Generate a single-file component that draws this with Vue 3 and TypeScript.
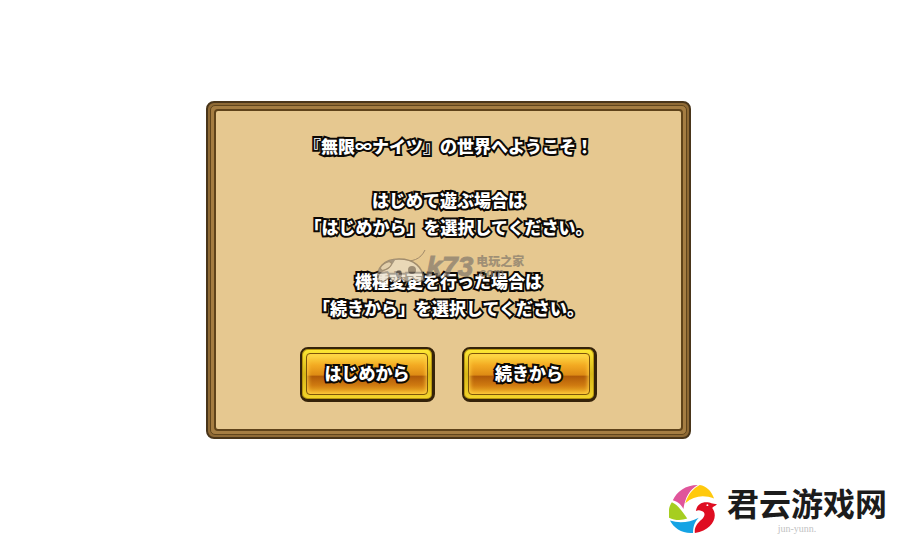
<script setup lang="ts">
interface Choice {
  id: string
  label: string
}

const paragraphs: string[][] = [
  ['『無限∞ナイツ』の世界へようこそ！'],
  ['はじめて遊ぶ場合は', '「はじめから」を選択してください。'],
  ['機種変更を行った場合は', '「続きから」を選択してください。'],
]

const choices: Choice[] = [
  { id: 'start', label: 'はじめから' },
  { id: 'continue', label: '続きから' },
]
</script>

<template>
  <main class="page">
    <section class="frame">
      <div class="frame-mid">
        <div class="panel">
          <div class="message">
            <p v-for="(lines, i) in paragraphs" :key="i">
              <span v-for="line in lines" :key="line" class="line outlined">{{ line }}</span>
            </p>
            <div class="watermark">
              <svg class="ghost" viewBox="0 0 54 36" width="54" height="36" aria-hidden="true">
                <path d="M25 11C37 14 46 10 50 1" fill="none" stroke="#84705a" stroke-width="1" />
                <path d="M3 31C1 19 9 10 24 10C39 10 48 18 49 31L43 33L38 29L32 33L26 29L20 33L14 29L8 33Z" fill="#ebdfc8" stroke="#84745f" stroke-width="1.5" />
                <path d="M3 29C2 19 9 11 21 10C17 15 16 20 9 22C6 23 4 26 3 29Z" fill="#8d8378" />
                <ellipse cx="11" cy="17" rx="6" ry="3" transform="rotate(-32 11 17)" fill="#e3d4b8" stroke="#84745f" />
                <ellipse cx="24" cy="25" rx="3" ry="4" fill="#81766a" />
                <ellipse cx="37" cy="21" rx="4" ry="4" fill="#81766a" />
              </svg>
              <b class="mark-name">k73</b>
              <span class="mark-side"><span>电玩之家</span><small>.com</small></span>
            </div>
          </div>
          <div class="choices">
            <button v-for="choice in choices" :key="choice.id" type="button" class="choice">
              <span class="choice-face outlined">{{ choice.label }}</span>
            </button>
          </div>
        </div>
      </div>
    </section>

    <footer class="brand">
      <svg class="brand-logo" viewBox="0 0 50 52" width="48" height="50" aria-hidden="true">
        <path d="M4 17C8 8 17 1 30 1C21 6 17 14 15 26C13 22 10 19 4 17Z" fill="#e0559b" />
        <path d="M32 1C39 2 44 7 47 15C36 11 26 12 17 20C20 10 25 5 32 1Z" fill="#ffc90d" />
        <path d="M3 19C8 21 13 27 19 36C13 38 6 38 0 35C-1 29 0 23 3 19Z" fill="#a6ce20" />
        <path d="M1 38C11 41 21 40 31 35C27 39 25 44 25 51C14 52 5 46 1 38Z" fill="#15a3e4" />
        <path d="M28 28C29 22 33 19 39 19C43 19 45 21 50 21C48 23 46 23 45 25C52 34 45 48 27 51C26 46 29 41 34 37C38 33 38 29 34 28C32 27 30 27 28 28Z" fill="#df0d21" />
        <circle cx="40" cy="22" r="1" fill="#fff" />
      </svg>
      <div class="brand-text">
        <strong>君云游戏网</strong>
        <span>jun-yunn.</span>
      </div>
    </footer>
  </main>
</template>

<style>
body {
  margin: 0;
  background: #fff;
}
</style>

<style scoped>
.page {
  position: relative;
  box-sizing: border-box;
  min-height: 100vh;
  display: flex;
  align-items: center;
  justify-content: center;
  font-family: "Noto Sans CJK JP", "Liberation Sans", sans-serif;
}

.frame {
  box-sizing: border-box;
  width: 54%;
  min-width: 340px;
  padding: 2px;
  border: 2px solid #49351a;
  border-radius: 8px;
  background: #8f6a35;
}

.frame-mid {
  padding: 3px;
  border: 1px solid #60451c;
  border-radius: 5px;
  background: #a57d42;
}

.panel {
  padding: 21px 16px 27px;
  border: 2px solid #5f431a;
  border-radius: 4px;
  background: #e6c890;
}

.message {
  position: relative;
  display: grid;
  gap: 27px;
  text-align: center;
}

.message p {
  margin: 0;
}

.line {
  display: block;
  font-size: 17px;
  line-height: 27px;
  white-space: nowrap;
}

.outlined {
  color: #fff;
  font-weight: 900;
  -webkit-text-stroke: 4px #0d0905;
  paint-order: stroke fill;
  text-shadow: 1px 1px 0 #0d0905;
}

.watermark {
  position: absolute;
  top: 117px;
  left: 50%;
  width: 152px;
  margin-left: -74px;
  display: flex;
  align-items: center;
  opacity: 0.7;
  color: #82786b;
}

.ghost {
  flex: none;
}

.mark-name {
  font: italic 700 28px/30px "Liberation Sans", sans-serif;
  margin-left: -2px;
  -webkit-text-stroke: 1px #82786b;
  text-shadow: 0 0 1px #f5e7cb;
}

.mark-side {
  display: grid;
  margin-left: 3px;
  font: 900 12px/12px "Noto Sans CJK SC", sans-serif;
  text-align: left;
  white-space: nowrap;
}

.mark-side small {
  font: 700 12px/12px "Liberation Sans", sans-serif;
}

.choices {
  display: flex;
  justify-content: center;
  gap: 27px;
  margin-top: 26px;
}

.choice {
  box-sizing: border-box;
  width: 135px;
  height: 55px;
  padding: 4px;
  display: flex;
  border: 2px solid #35230a;
  border-right-width: 3px;
  border-bottom-width: 3px;
  border-radius: 8px;
  background: linear-gradient(#ffe935, #d8b717 50%, #f4d52b);
  box-shadow: inset 0 0 0 1px #b8960f;
  cursor: pointer;
}

.choice-face {
  flex: 1;
  display: flex;
  align-items: center;
  justify-content: center;
  padding-bottom: 4px;
  border: 1px solid #7d550a;
  border-radius: 4px;
  background: linear-gradient(#ffe04a, #f3aa22 28%, #dd8a14 53%, #b05a08 55%, #cf7a10 78%, #f3b52a);
  box-shadow: inset 0 0 4px 1px #ffcf40;
  font-family: "Noto Sans CJK JP", sans-serif;
  font-size: 17px;
  line-height: 27px;
}

.brand {
  position: absolute;
  right: 10px;
  bottom: 4px;
  display: flex;
  align-items: center;
  gap: 10px;
}

.brand-text {
  display: grid;
  justify-items: center;
  color: #1c1c1c;
}

.brand-text strong {
  font: 700 32px/40px "Noto Sans CJK SC", sans-serif;
}

.brand-text span {
  padding-right: 20px;
  color: #c2c2c2;
  font: 10px/14px "Liberation Serif", serif;
}
</style>
